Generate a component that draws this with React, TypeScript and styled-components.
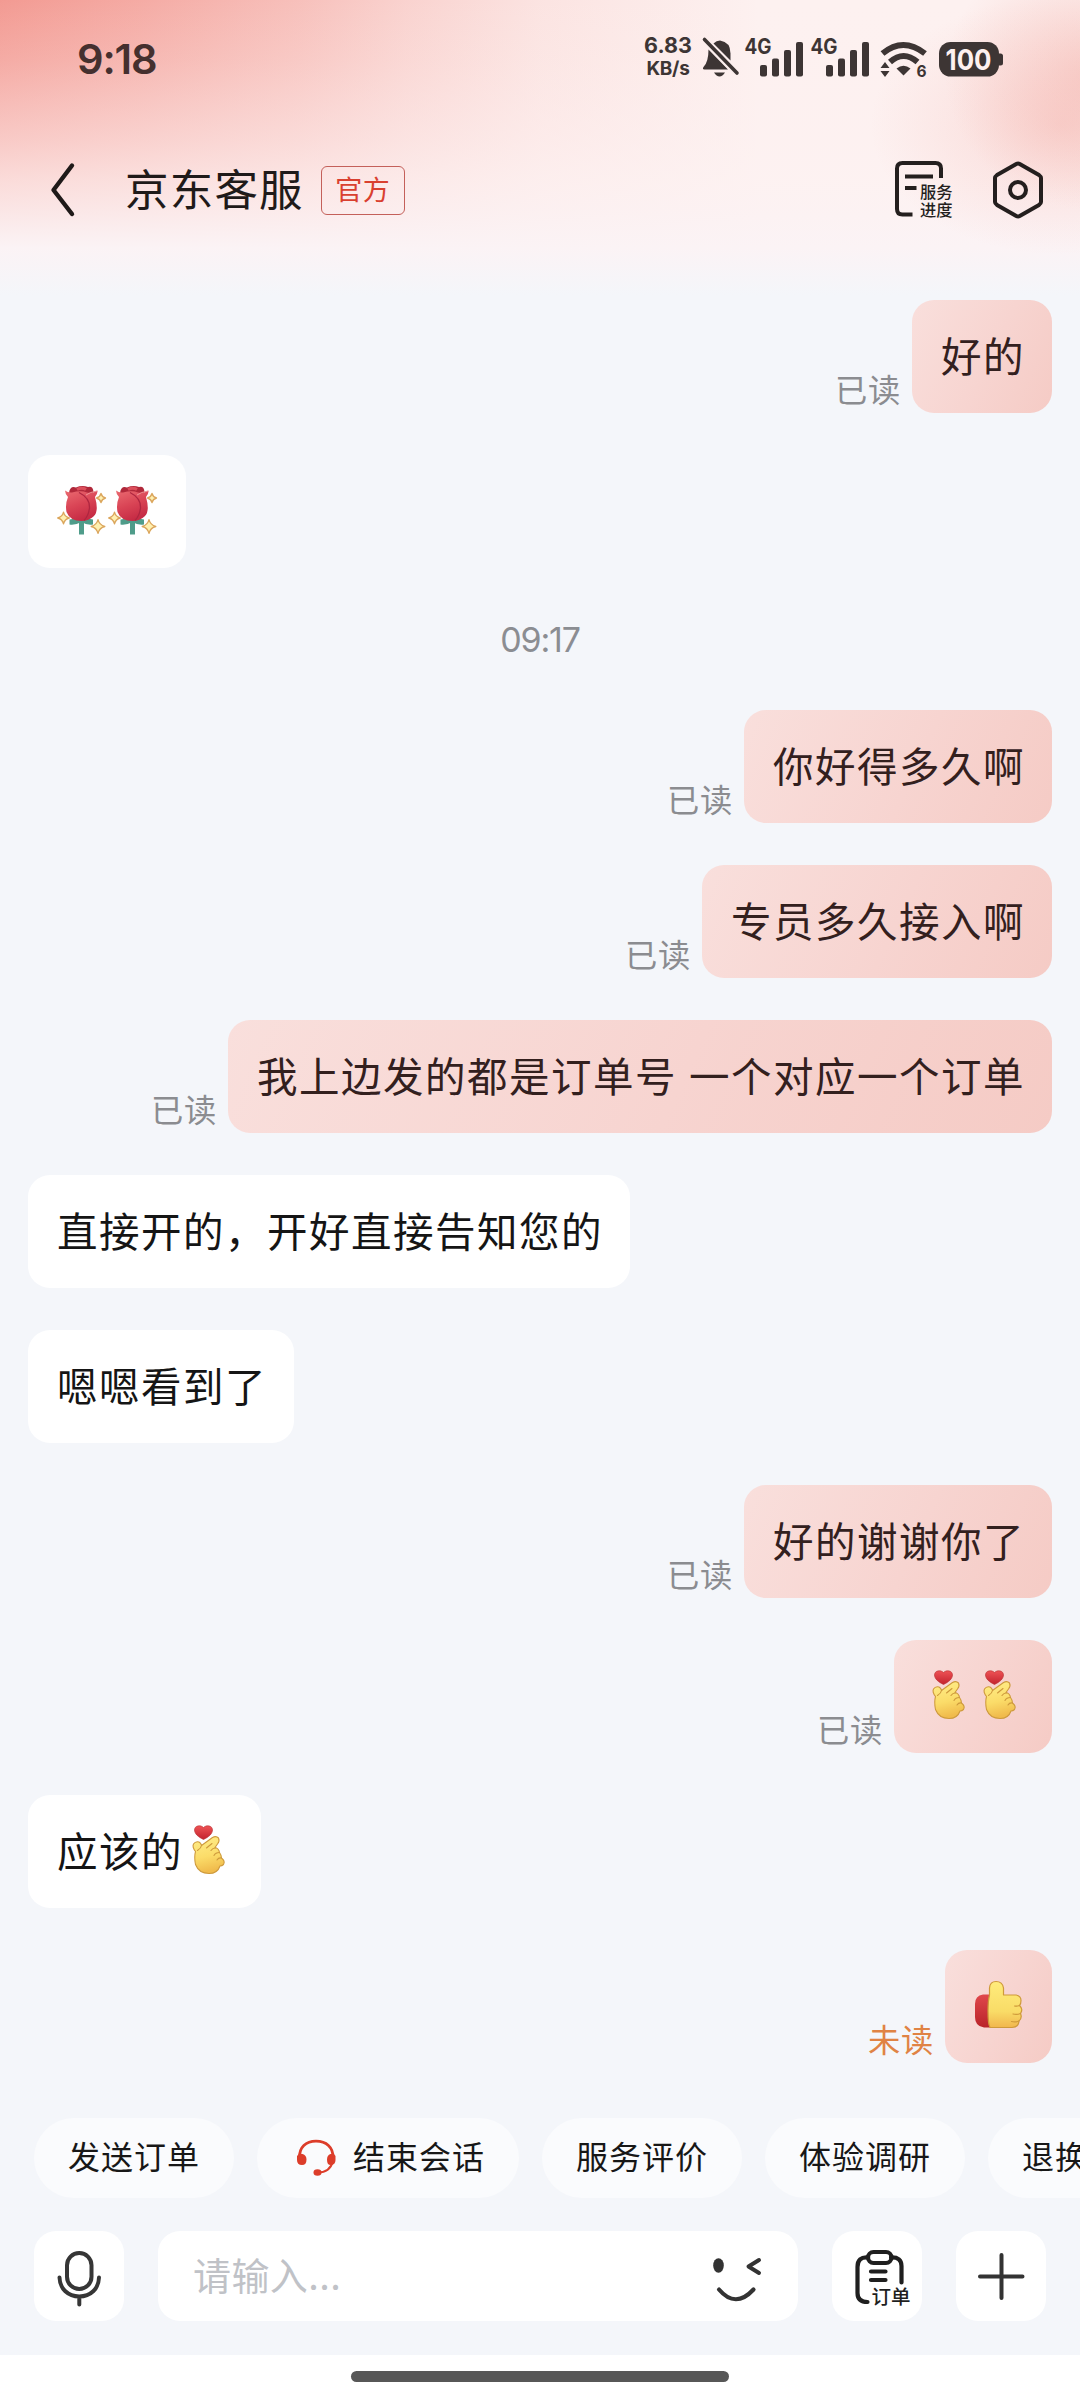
import React from 'react';
import styled, { createGlobalStyle } from 'styled-components';

const Global = createGlobalStyle`
  * { box-sizing: border-box; }
  body {
    margin: 0;
    background: #f4f6fa;
    font-family: Inter, "Noto Sans CJK SC", sans-serif;
  }
`;

const Screen = styled.div`
  width: 1080px;
  height: 2400px;
  display: flex;
  flex-direction: column;
  overflow: hidden;
  background:
    radial-gradient(ellipse 150px 135px at 1095px 75px, rgba(240, 150, 140, 0.34), rgba(240, 150, 140, 0.17) 50%, rgba(240, 150, 140, 0) 100%),
    radial-gradient(ellipse 190px 130px at 1060px 125px, rgba(240, 150, 140, 0.28), rgba(240, 150, 140, 0.13) 50%, rgba(240, 150, 140, 0) 100%),
    linear-gradient(to bottom,
      rgba(253, 240, 238, 0) 0,
      rgba(253, 240, 239, 0.2) 60px,
      rgba(253, 240, 240, 0.38) 100px,
      rgba(253, 241, 241, 0.55) 140px,
      rgba(253, 242, 242, 0.74) 180px,
      rgba(252, 242, 243, 0.86) 210px,
      #fbf3f5 248px,
      #f4f6fa 295px),
    linear-gradient(to right,
      rgba(240, 130, 120, 0.78) 0,
      rgba(240, 130, 120, 0.63) 140px,
      rgba(240, 130, 120, 0.44) 300px,
      rgba(240, 130, 120, 0.27) 410px,
      rgba(240, 130, 120, 0.12) 540px,
      rgba(240, 130, 120, 0) 760px),
    #fdf1f0;
`;

const StatusBar = styled.div`
  height: 118px;
  padding: 0 76px 0 77px;
  display: flex;
  align-items: center;
  justify-content: space-between;
  color: #45302f;
`;

const Clock = styled.div`
  font-size: 41.5px;
  font-weight: 600;
  letter-spacing: -1.1px;
`;

const StatusIcons = styled.div`
  display: flex;
  align-items: center;
  padding-bottom: 4px;
  svg { display: block; overflow: visible; }
`;

const IconSlot = styled.span<{ $gap: number }>`
  margin-right: ${(p) => p.$gap}px;
`;

const Speed = styled.div`
  width: 48px;
  margin-right: 10px;
  display: flex;
  flex-direction: column;
  align-items: center;
  font-weight: 700;
  color: #3d3534;
  font-size: 21.5px;
  line-height: 24px;
  white-space: nowrap;
  small { font-size: 19px; line-height: 24px; font-weight: 700; letter-spacing: -0.3px; }
`;

const NavBar = styled.header`
  height: 144px;
  padding: 0 34px 0 46px;
  display: flex;
  align-items: center;
  svg { display: block; overflow: visible; }
`;

const Title = styled.h1`
  margin: 0 17px 0 45px;
  font-size: 43.5px;
  font-weight: 400;
  letter-spacing: 1.2px;
  line-height: 60px;
  color: #1f1a19;
`;

const Tag = styled.span`
  width: 84px;
  height: 49px;
  padding-top: 2px;
  display: flex;
  align-items: center;
  justify-content: center;
  border: 1.5px solid #c4605a;
  border-radius: 6px;
  color: #d9402f;
  font-size: 27px;
  letter-spacing: 0.5px;
  line-height: 40px;
`;

const NavActions = styled.div`
  margin-left: auto;
  display: flex;
  align-items: center;
  gap: 36px;
`;

const Chat = styled.main`
  flex: 1;
  padding: 38px 28px 0;
  display: flex;
  flex-direction: column;
  gap: 42px;
`;

const Row = styled.div<{ $mine?: boolean }>`
  height: 113px;
  flex: none;
  display: flex;
  align-items: flex-end;
  justify-content: ${(p) => (p.$mine ? 'flex-end' : 'flex-start')};
`;

const Bubble = styled.div<{ $mine?: boolean }>`
  height: 113px;
  padding: 2px 27px 0 29px;
  display: flex;
  align-items: center;
  border-radius: 22px;
  background: ${(p) => (p.$mine ? 'linear-gradient(115deg, #f9dfdc, #f7d4d0 55%, #f5cbc5)' : '#ffffff')};
  color: ${(p) => (p.$mine ? '#33201e' : '#151515')};
  font-size: 40.5px;
  letter-spacing: 1.5px;
  word-spacing: -1px;
  line-height: 60px;
  white-space: nowrap;
  svg { display: block; flex: none; margin-top: -2px; }
`;

const Receipt = styled.span<{ $unread?: boolean }>`
  margin: 0 11px 0 0;
  padding-bottom: 1px;
  font-size: 32.3px;
  letter-spacing: 0.7px;
  line-height: 42px;
  color: ${(p) => (p.$unread ? '#e08344' : '#8b8c90')};
`;

const TimeStamp = styled.div`
  height: 58px;
  flex: none;
  display: flex;
  align-items: center;
  justify-content: center;
  font-size: 34px;
  letter-spacing: -1.2px;
  color: #8b8d92;
`;

const Chips = styled.div`
  height: 80px;
  flex: none;
  margin-bottom: 33px;
  padding-left: 34px;
  display: flex;
  gap: 23px;
  overflow: hidden;
`;

const Chip = styled.button`
  height: 80px;
  flex: none;
  padding: 0 34px;
  display: flex;
  align-items: center;
  border: 0;
  border-radius: 40px;
  background: #fafbfd;
  color: #171717;
  font: 400 32px/48px Inter, "Noto Sans CJK SC", sans-serif;
  letter-spacing: 1px;
  white-space: nowrap;
  svg { display: block; margin-right: 14px; }
`;

const Composer = styled.div`
  height: 124px;
  flex: none;
  padding: 0 34px;
  display: flex;
  align-items: flex-start;
  gap: 34px;
`;

const SquareButton = styled.button`
  width: 90px;
  height: 90px;
  flex: none;
  padding: 0;
  border: 0;
  border-radius: 22px;
  background: #fff;
  svg { display: block; }
`;

const InputBox = styled.div`
  flex: 1;
  height: 90px;
  padding: 0 30px 4px 35px;
  display: flex;
  align-items: center;
  justify-content: space-between;
  border-radius: 22px;
  background: #fff;
  color: #c0c2c7;
  font-family: "Noto Sans CJK SC", sans-serif;
  font-size: 38px;
  letter-spacing: 0.4px;
  line-height: 56px;
  svg { display: block; margin-top: 4px; }
`;

const HomeArea = styled.footer`
  height: 45px;
  flex: none;
  padding-top: 16px;
  display: flex;
  justify-content: center;
  background: #fff;
`;

const HomeBar = styled.div`
  width: 378px;
  height: 11px;
  border-radius: 6px;
  background: #575757;
`;

const cjk = '"Noto Sans CJK SC", sans-serif';
const ink = '#3d3534';

const BellOff = () => (
  <svg width="37" height="42" viewBox="0 0 37 42" fill={ink}>
    <path d="M11.500 7.500Q14.500 4.500 18 4.500Q28.500 6 28.500 17.500V24.500Z" />
    <path d="M6.500 13.500L26 33.500H2.500Q0 33.500 1.500 31Q6.500 26 6.500 13.500Z" />
    <path d="M12 36.500H23Q20.500 40.500 17.500 40.500T12 36.500Z" />
    <path d="M4.500 8.500L32 37" stroke="#fbeeed" strokeWidth="3" />
    <path d="M2.500 3.500L35 37" stroke={ink} strokeWidth="3.600" strokeLinecap="round" />
  </svg>
);

const Signal = () => (
  <svg width="66" height="42" viewBox="0 0 66 42" fill={ink}>
    <text x="1.500" y="17.500" fontFamily="Inter, sans-serif" fontWeight="700" fontSize="21" textLength="27" lengthAdjust="spacingAndGlyphs">4G</text>
    <rect x="17" y="29" width="7" height="11.500" rx="2" />
    <rect x="29" y="22.500" width="7" height="18" rx="2" />
    <rect x="41" y="14" width="7" height="26.500" rx="2" />
    <rect x="53" y="6" width="7" height="34.500" rx="2" />
  </svg>
);

const Wifi = () => (
  <svg width="52" height="42" viewBox="0 0 52 42" fill="none">
    <path d="M6.500 17.500Q27 .5 49 17.500" stroke={ink} strokeWidth="6" />
    <path d="M14 26Q27.500 14 41.500 26" stroke={ink} strokeWidth="6" />
    <path d="M20.500 32.500Q27.500 27 34.500 32.500L27.500 39.500Z" fill={ink} />
    <path d="M4.500 32L9 26L13.500 32ZM4.500 35L9 41L13.500 35Z" fill={ink} />
    <text x="40.500" y="41" fontFamily="Inter, sans-serif" fontWeight="700" fontSize="15.500" fill={ink}>6</text>
  </svg>
);

const Battery = () => (
  <svg width="66" height="42" viewBox="0 0 66 42">
    <rect x="1" y="6" width="60" height="34.500" rx="11.500" fill={ink} />
    <path d="M61 17.500H62.500Q65 17.500 65 20V27Q65 29.500 62.500 29.500H61Z" fill={ink} />
    <text x="7.500" y="33.500" fontFamily="Inter, sans-serif" fontWeight="700" fontSize="29" textLength="46" lengthAdjust="spacingAndGlyphs" fill="#fdf0ef">100</text>
  </svg>
);

const Back = () => (
  <svg width="34" height="60" viewBox="0 0 34 60" fill="none" stroke="#1f1a19" strokeWidth="4.400" strokeLinecap="round" strokeLinejoin="round">
    <path d="M26 5.500L7.500 30L26 54" />
  </svg>
);

const ServiceProgress = () => (
  <svg width="62" height="60" viewBox="0 0 62 60" fill="none" stroke="#241f1e" strokeWidth="4">
    <path d="M49 18V8.500Q49 3 43.500 3H10.500Q5 3 5 8.500V49Q5 54.500 10.500 54.500H20.500" />
    <path d="M13 16.500H41M13 28H24.500" />
    <g fill="#241f1e" stroke="none" fontFamily={cjk} fontWeight="500" fontSize="16.300">
      <text x="28" y="38">服务</text>
      <text x="28" y="55.500">进度</text>
    </g>
  </svg>
);

const HexSetting = () => (
  <svg width="56" height="60" viewBox="0 0 56 60" fill="none" stroke="#241f1e" strokeWidth="4" strokeLinejoin="round">
    <path d="M26.300 4Q28 3 29.700 4L49 15Q51 16.500 51 18V42Q51 43.500 49 45L29.700 56Q28 57 26.300 56L7 45Q5 43.500 5 42V18Q5 16.500 7 15Z" />
    <circle cx="28" cy="30" r="8" />
  </svg>
);

const Sparkle = ({ x, y, r }: { x: number; y: number; r: number }) => (
  <path
    transform={`translate(${x} ${y}) scale(${r})`}
    d="M0-1Q.2-.2 1 0Q.2 .2 0 1Q-.2 .2-1 0Q-.2-.2 0-1Z"
    fill="#fff0b0"
    stroke="#dba65c"
    strokeWidth={1.3 / r}
    strokeLinejoin="round"
  />
);

const Rose = () => (
  <svg width="51" height="56" viewBox="0 0 51 56">
    <defs>
      <linearGradient id="petal" x1="0" y1="0" x2=".4" y2="1">
        <stop offset="0" stopColor="#ea6a70" />
        <stop offset=".55" stopColor="#d94455" />
        <stop offset="1" stopColor="#c62c45" />
      </linearGradient>
    </defs>
    <path d="M22 34H27V50.500H22Z" fill="#4f9c8a" />
    <path d="M12.500 35.500Q25 33 36 35.500V40.500Q30 41.500 24.500 38Q18 41.500 12.500 40.500Z" fill="#4f9c8a" />
    <path d="M12 9Q13 1.500 19 3.500Q25 1 31 3Q36 1.500 36.500 8L33 15H15Z" fill="#b0283a" />
    <path d="M20 5.500Q25 3 29 5.500" stroke="#dc4f5c" strokeWidth="3" fill="none" />
    <path d="M8 6.500Q11 9 15 8.500Q24 6 30 8.500Q36 9.500 40.500 6.500Q41 9 38 13Q42 27 37 32Q32 37 24.500 37Q13 37 9.500 28Q8 20 11 13Q8 9.500 8 6.500Z" fill="url(#petal)" />
    <path d="M22 8.500Q33 14 32.500 24Q31.500 32 27 36.500" stroke="#ae2640" strokeWidth="1.300" fill="none" />
    <path d="M40 7Q33 8 29 11" stroke="#f09497" strokeWidth="1" fill="none" />
    <Sparkle x={44} y={14} r={4.5} />
    <Sparkle x={6.5} y={34} r={5.8} />
    <Sparkle x={41} y={42.5} r={6.8} />
  </svg>
);

const FingerHeart = () => (
  <svg width="51" height="56" viewBox="0 0 51 56">
    <defs>
      <linearGradient id="skin" x1="0" y1="0" x2=".2" y2="1">
        <stop offset="0" stopColor="#ffee8a" />
        <stop offset=".6" stopColor="#fbdc69" />
        <stop offset="1" stopColor="#f0bb4c" />
      </linearGradient>
      <linearGradient id="heart" x1="0" y1="0" x2="0" y2="1">
        <stop offset="0" stopColor="#ee5355" />
        <stop offset="1" stopColor="#c3222e" />
      </linearGradient>
    </defs>
    <path d="M20.500 15.500C15 13 11.500 9.500 11.500 6C11.500 1.500 17.500 .5 20.500 3.500C23.500 .5 29.500 1.500 29.500 6C29.500 9.500 26 13 20.500 15.500Z" fill="url(#heart)" stroke="#b52c2e" strokeWidth=".6" />
    <g stroke="#ce9a3c" strokeWidth="1.100" strokeLinecap="round" strokeLinejoin="round">
      <path d="M12.500 27.500Q9 23 10.500 20Q12.500 17 16 18Q18 19 18.500 21.500L29.500 13.500Q33 11.500 35.500 14Q37 17 34.500 20L32 23.500Q36 24.500 36.500 28.500Q38.500 31 38.500 34Q42.500 37 40.500 40.500Q39 42 37 42Q34.500 49.500 26 49.500Q16 49.500 12.500 40.500Q11 33 12.500 27.500Z" fill="url(#skin)" />
      <path d="M18.500 21.500Q18 24.500 14.500 26.500M28 26.500Q30 23.500 33 24M31 31.500Q32.500 28.500 36.500 28.500M34 36Q35.500 33.500 38.500 34M23.500 24L29 19.500" fill="none" />
    </g>
  </svg>
);

const ThumbUp = () => (
  <svg width="51" height="56" viewBox="0 0 51 56">
    <defs>
      <linearGradient id="thumb" x1="0" y1="0" x2="0" y2="1">
        <stop offset="0" stopColor="#ffec7c" />
        <stop offset=".65" stopColor="#f9dc67" />
        <stop offset="1" stopColor="#f1b64d" />
      </linearGradient>
      <linearGradient id="cuff" x1="0" y1="0" x2="0" y2="1">
        <stop offset="0" stopColor="#e0474c" />
        <stop offset="1" stopColor="#b92329" />
      </linearGradient>
    </defs>
    <path d="M17 15.500H9Q1 16.500 1 25V38Q1 47.500 10 48.500H18Z" fill="url(#cuff)" />
    <g stroke="#cf9a3a" strokeWidth="1.200" strokeLinejoin="round" strokeLinecap="round">
      <path d="M15.500 16V9Q16 2.500 22 2.500Q28.500 2.500 29.500 9V16H42Q47 17 47 21.500Q47 25 45.500 26.500Q49.500 30 46.500 34.500Q48.500 39 45 42Q44.500 48.500 38 48.500H16Q14 45 14 32Q14 22 15.500 16Z" fill="url(#thumb)" />
      <path d="M45.500 26.500Q43 27.500 40.500 27M46.500 34.500Q43 36 39 35M45 42Q41.500 43.500 37.500 42.500" fill="none" />
    </g>
  </svg>
);

const Headset = () => (
  <svg width="48" height="48" viewBox="0 0 48 48" fill="none" stroke="#dc3d2a" strokeWidth="2.800">
    <path d="M8.500 24C8 13 15 7.200 25 7.200S42.500 13 42 24" />
    <path d="M42 27Q39 38.500 27 38.500" strokeWidth="2" />
    <g fill="#dc3d2a" stroke="none">
      <path d="M6 22Q8 19 11.500 20Q15.500 21 15.500 25.500Q15.500 31 11 31Q6 31 6 26Z" />
      <path d="M44.500 22Q43 19 39.500 20Q36 21 36 25.500Q36 31 39.500 31Q44.500 31 44.500 26Z" />
      <ellipse cx="26.500" cy="38.500" rx="4" ry="3.200" />
    </g>
  </svg>
);

const Mic = () => (
  <svg width="90" height="90" viewBox="0 0 90 90" fill="none" stroke="#363636" strokeWidth="4" strokeLinecap="round">
    <rect x="33" y="22" width="24.500" height="36" rx="12.200" />
    <path d="M25.500 46.500C26 58 34 65.500 45.300 65.500S64.500 58 65 46.500M45.300 65.500V73.500" />
  </svg>
);

const Wink = () => (
  <svg width="60" height="60" viewBox="0 0 60 60" fill="none" stroke="#333" strokeWidth="4.200" strokeLinecap="round">
    <ellipse cx="10.500" cy="19.500" rx="5.300" ry="7.300" fill="#333" stroke="none" />
    <path d="M51 14L40.500 20.500L51 27" strokeLinejoin="round" strokeWidth="4" />
    <path d="M11 43.500Q27.500 63 45.500 43.500" />
  </svg>
);

const Order = () => (
  <svg width="90" height="90" viewBox="0 0 90 90" fill="none" stroke="#1f1f1f" strokeWidth="4.200" strokeLinecap="round" strokeLinejoin="round">
    <path d="M36 26.500Q25.500 25.500 25.500 36V62Q25.500 71 35.500 71M59 26.500Q69.500 26 69.500 35V51.500" />
    <rect x="36" y="21" width="23.500" height="11" rx="5.500" />
    <path d="M39 40.500H53.500M39 49H53.500" />
    <text x="39.500" y="73" fill="#1f1f1f" stroke="none" fontFamily={cjk} fontWeight="500" fontSize="19.500">订单</text>
  </svg>
);

const Plus = () => (
  <svg width="90" height="90" viewBox="0 0 90 90" fill="none" stroke="#333" strokeWidth="4" strokeLinecap="round">
    <path d="M45.500 24V67M24 45.500H66.500" />
  </svg>
);

type Message =
  | { kind: 'time'; text: string }
  | { kind: 'msg'; mine?: boolean; unread?: boolean; body: React.ReactNode };

const messages: Message[] = [
  { kind: 'msg', mine: true, body: '好的' },
  { kind: 'msg', body: <><Rose /><Rose /></> },
  { kind: 'time', text: '09:17' },
  { kind: 'msg', mine: true, body: '你好得多久啊' },
  { kind: 'msg', mine: true, body: '专员多久接入啊' },
  { kind: 'msg', mine: true, body: '我上边发的都是订单号 一个对应一个订单' },
  { kind: 'msg', body: '直接开的，开好直接告知您的' },
  { kind: 'msg', body: '嗯嗯看到了' },
  { kind: 'msg', mine: true, body: '好的谢谢你了' },
  { kind: 'msg', mine: true, body: <><FingerHeart /><FingerHeart /></> },
  { kind: 'msg', body: <>应该的<FingerHeart /></> },
  { kind: 'msg', mine: true, unread: true, body: <ThumbUp /> },
];

export default function App() {
  return (
    <Screen>
      <Global />
      <StatusBar>
        <Clock>9:18</Clock>
        <StatusIcons>
          <Speed>6.83<small>KB/s</small></Speed>
          <IconSlot $gap={4}><BellOff /></IconSlot>
          <IconSlot $gap={0}><Signal /></IconSlot>
          <IconSlot $gap={1}><Signal /></IconSlot>
          <IconSlot $gap={10}><Wifi /></IconSlot>
          <Battery />
        </StatusIcons>
      </StatusBar>
      <NavBar>
        <Back />
        <Title>京东客服</Title>
        <Tag>官方</Tag>
        <NavActions>
          <ServiceProgress />
          <HexSetting />
        </NavActions>
      </NavBar>
      <Chat>
        {messages.map((m, i) =>
          m.kind === 'time' ? (
            <TimeStamp key={i}>{m.text}</TimeStamp>
          ) : (
            <Row key={i} $mine={m.mine}>
              {m.mine && <Receipt $unread={m.unread}>{m.unread ? '未读' : '已读'}</Receipt>}
              <Bubble $mine={m.mine}>{m.body}</Bubble>
            </Row>
          ),
        )}
      </Chat>
      <Chips>
        <Chip>发送订单</Chip>
        <Chip><Headset />结束会话</Chip>
        <Chip>服务评价</Chip>
        <Chip>体验调研</Chip>
        <Chip>退换货</Chip>
      </Chips>
      <Composer>
        <SquareButton><Mic /></SquareButton>
        <InputBox>请输入...<Wink /></InputBox>
        <SquareButton><Order /></SquareButton>
        <SquareButton><Plus /></SquareButton>
      </Composer>
      <HomeArea><HomeBar /></HomeArea>
    </Screen>
  );
}
